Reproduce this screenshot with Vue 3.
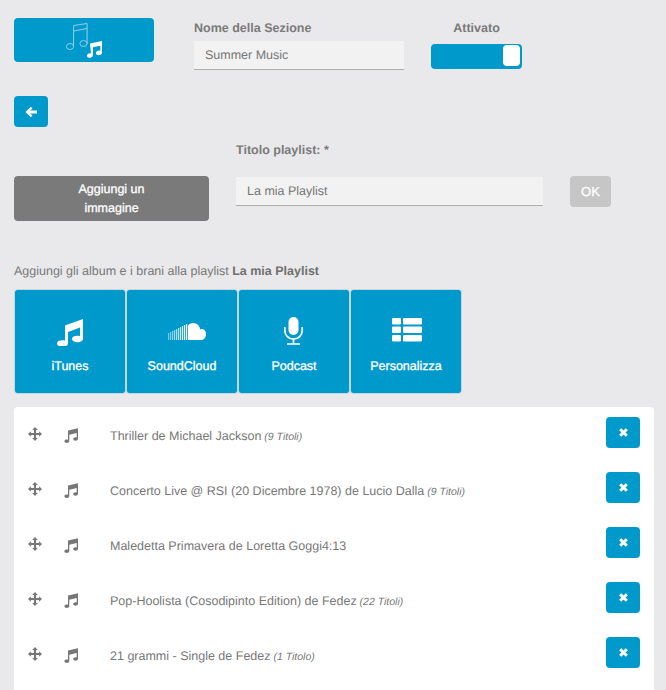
<template>
  <div class="page">
    <div class="section-head">
      <button type="button" class="btn hero-btn" aria-label="Musica">
        <svg width="37" height="35" viewBox="0 0 37 35">
          <g fill="none" stroke="#8fd0e8" stroke-width="1">
            <ellipse cx="4" cy="23.5" rx="3.6" ry="3" />
            <ellipse cx="17.5" cy="20.5" rx="3.6" ry="3" />
            <path d="M7.6 23.5V2.5L21.1 0.5V20.5M7.6 8L21.1 5.500" />
          </g>
          <path
            fill="#fff"
            d="M24 20.500l12-2.500v11.500c0 1.700-1.600 2.700-3.200 2.700s-2.800-1-2.800-2.300 1.300-2.400 3-2.400c.5 0 1 .1 1.300.2v-5l-7.400 1.600v7.800c0 1.700-1.600 2.800-3.200 2.800s-2.800-1-2.800-2.300 1.300-2.400 3-2.400c.5 0 .9.100 1.100.2z"
          />
        </svg>
      </button>
      <div class="field name-field">
        <label class="field-label" for="section-name">Nome della Sezione</label>
        <input id="section-name" class="text-input" type="text" value="Summer Music" />
      </div>
      <div class="toggle-field">
        <span class="field-label">Attivato</span>
        <button type="button" class="toggle" aria-pressed="true" aria-label="Attivato">
          <span class="toggle-knob"></span>
        </button>
      </div>
    </div>

    <button type="button" class="btn back-btn" aria-label="Indietro">
      <svg width="12" height="12" viewBox="0 0 12 12">
        <path fill="#fff" d="M5.800.7l1.700 1.700-2.300 2.200H12v2.800H5.200l2.300 2.200-1.700 1.700L.5 6z" />
      </svg>
    </button>

    <div class="playlist-row">
      <button type="button" class="btn image-btn">Aggiungi un<br />immagine</button>
      <div class="field title-field">
        <label class="field-label title-label" for="playlist-title">Titolo playlist: *</label>
        <input id="playlist-title" class="text-input" type="text" value="La mia Playlist" />
      </div>
      <button type="button" class="btn ok-btn">OK</button>
    </div>

    <p class="hint">Aggiungi gli album e i brani alla playlist <strong>La mia Playlist</strong></p>

    <div class="sources">
      <button v-for="source in sources" :key="source.name" type="button" class="btn source">
        <svg width="52" height="30" viewBox="0 0 52 30">
          <path
            v-if="source.icon === 'music'"
            fill="#fff"
            d="M21 9.500L39 3v20c0 2-2.400 3.200-5.500 3.200s-5.500-1.200-5.500-3.200 2.400-3.200 5.500-3.200c1 0 1.800.1 2.500.4v-8.700L24 16v11.500c0 2-2.400 3.200-5.500 3.200S13 29.500 13 27.500s2.400-3.200 5.500-3.200c1 0 1.800.1 2.500.4z"
          />
          <g v-else-if="source.icon === 'cloud'" fill="#fff">
            <rect
              v-for="bar in cloudBars"
              :key="bar.x"
              :x="bar.x"
              :y="24 - bar.h"
              width="1.2"
              :height="bar.h"
              :opacity="bar.o"
            />
            <path d="M32 9.500c1.200-1.600 3-2.500 5-2.500 3.800 0 6.800 2.800 7.200 6.400.5-.2 1-.3 1.500-.3 2.600 0 4.300 2.200 4.300 5.200S48 24 45.500 24H32z" />
          </g>
          <g v-else-if="source.icon === 'mic'">
            <rect x="20.500" y="1" width="10" height="18" rx="5" fill="#fff" />
            <path
              fill="none"
              stroke="#fff"
              stroke-width="1.700"
              d="M16.800 11v3.500a8.700 8.700 0 0 0 17.400 0V11M25.500 23v4.500M19 28h13"
            />
          </g>
          <g v-else fill="#fff" transform="translate(12 2)">
            <rect width="9" height="6.500" rx="1.300" />
            <rect y="8.500" width="9" height="6.500" rx="1.300" />
            <rect y="17" width="9" height="6.500" rx="1.300" />
            <rect x="11" width="19" height="6.500" rx="1.300" />
            <rect x="11" y="8.500" width="19" height="6.500" rx="1.300" />
            <rect x="11" y="17" width="19" height="6.500" rx="1.300" />
          </g>
        </svg>
        <span>{{ source.name }}</span>
      </button>
    </div>

    <div class="tracks">
      <div v-for="track in tracks" :key="track.title" class="track">
        <svg class="move-icon" width="14" height="14" viewBox="0 0 14 14">
          <path
            fill="#777"
            d="M7 0l2.800 2.900H8.100v3h3V4.200L14 7l-2.900 2.800V8.100h-3v3h1.700L7 14l-2.800-2.900h1.700v-3h-3v1.700L0 7l2.900-2.800v1.700h3v-3H4.200z"
          />
        </svg>
        <svg class="note-icon" width="14" height="15" viewBox="0 0 14 15">
          <path
            fill="#777"
            d="M4 2.600L14 .3v10.500c0 1.200-1.200 1.900-2.400 1.900s-2.400-.7-2.400-1.700 1.100-1.700 2.400-1.700c.4 0 .8.100 1.100.2V5L5.300 6.700V13c0 1.200-1.200 1.900-2.500 1.900S.4 14.200.4 13.200s1.100-1.700 2.400-1.700c.5 0 .9.100 1.200.2z"
          />
        </svg>
        <span class="track-text">{{ track.title }}<em v-if="track.count"> ({{ track.count }})</em></span>
        <button type="button" class="btn remove-btn" aria-label="Rimuovi">
          <svg width="9" height="9" viewBox="0 0 9 9">
            <path fill="none" stroke="#fff" stroke-width="3" d="M1.200 1.200l6.600 6.600M7.800 1.200L1.200 7.800" />
          </svg>
        </button>
      </div>
    </div>
  </div>
</template>

<script setup>
const sources = [
  { name: 'iTunes', icon: 'music' },
  { name: 'SoundCloud', icon: 'cloud' },
  { name: 'Podcast', icon: 'mic' },
  { name: 'Personalizza', icon: 'list' }
]

// bars of the soundcloud logo, fading out to the left
const cloudBars = Array.from({ length: 10 }, (_, i) => ({
  x: 12 + i * 2,
  h: 7 + i,
  o: 0.45 + i * 0.06
}))

const tracks = [
  { title: 'Thriller de Michael Jackson', count: '9 Titoli' },
  { title: 'Concerto Live @ RSI (20 Dicembre 1978) de Lucio Dalla', count: '9 Titoli' },
  { title: 'Maledetta Primavera de Loretta Goggi4:13' },
  { title: 'Pop-Hoolista (Cosodipinto Edition) de Fedez', count: '22 Titoli' },
  { title: '21 grammi - Single de Fedez', count: '1 Titolo' }
]
</script>

<style>
html,
body {
  background: #e9e9eb;
}
</style>

<style scoped>
.page {
  height: 690px;
  box-sizing: border-box;
  padding: 18px 12px 0 14px;
  overflow: hidden;
  background: #e9e9eb;
  color: #777;
  font-family: "Liberation Sans", Arial, sans-serif;
  font-size: 12.5px;
  text-rendering: geometricPrecision;
}

.btn {
  display: block;
  padding: 0;
  border: 0;
  border-radius: 4px;
  background: #0099cb;
  color: #fff;
  font-family: inherit;
  font-size: 12.5px;
  text-rendering: geometricPrecision;
  -webkit-text-stroke: 0.3px #fff;
  cursor: pointer;
}

.section-head {
  display: flex;
  align-items: flex-start;
}

.hero-btn {
  display: flex;
  align-items: center;
  justify-content: center;
  width: 140px;
  height: 44px;
}

.field {
  display: flex;
  flex-direction: column;
}

.field-label {
  font-weight: 700;
  line-height: 14px;
  color: #7a7a7a;
}

.name-field {
  width: 210px;
  margin: 3px 0 0 40px;
  gap: 6px;
}

.text-input {
  box-sizing: border-box;
  width: 100%;
  height: 29px;
  padding: 0 11px;
  border: 0;
  border-bottom: 1px solid #aeaeae;
  border-radius: 0;
  background: #f2f2f2;
  color: #777;
  font-family: inherit;
  font-size: 12.5px;
  text-rendering: geometricPrecision;
}

.toggle-field {
  display: flex;
  flex-direction: column;
  align-items: center;
  gap: 9px;
  width: 91px;
  margin: 3px 0 0 27px;
}

.toggle {
  display: flex;
  justify-content: flex-end;
  box-sizing: border-box;
  width: 91px;
  height: 25px;
  padding: 1px 2px 0 0;
  border: 0;
  border-radius: 4px;
  background: #0099cb;
}

.toggle-knob {
  width: 17px;
  height: 21px;
  border-radius: 4px;
  background: #fff;
}

.back-btn {
  display: flex;
  align-items: center;
  justify-content: center;
  width: 34px;
  height: 31px;
  margin-top: 26px;
}

.playlist-row {
  display: flex;
  align-items: flex-start;
  margin-top: 16px;
}

.image-btn {
  width: 195px;
  height: 45px;
  margin-top: 33px;
  background: #7a7a7a;
  line-height: 19px;
}

.title-field {
  width: 307px;
  margin-left: 27px;
}

.title-label {
  margin-bottom: 20px;
}

.ok-btn {
  width: 41px;
  height: 31px;
  margin: 33px 0 0 27px;
  background: #c6c6c6;
  font-size: 13px;
}

.hint {
  margin: 43px 0 0;
  line-height: 14px;
}

.hint strong {
  color: #6f6f6f;
}

.sources {
  display: flex;
  gap: 2px;
  margin: 12px 0 0 1px;
}

.source {
  display: flex;
  flex-direction: column;
  align-items: center;
  width: 110px;
  height: 103px;
  padding-top: 26px;
  box-sizing: border-box;
  border-radius: 2px;
  outline: 1px solid #c6d6de;
}

.source span {
  margin-top: 13px;
  line-height: 14px;
}

.tracks {
  width: 640px;
  margin-top: 14px;
  padding-top: 10px;
  padding-bottom: 40px;
  border-radius: 4px;
  background: #fff;
}

.track {
  display: flex;
  align-items: flex-start;
  height: 55px;
}

.move-icon {
  flex: none;
  margin: 10px 0 0 14px;
}

.note-icon {
  flex: none;
  margin: 11px 0 0 22px;
}

.track-text {
  flex: 1;
  margin: 12px 0 0 32px;
  line-height: 14px;
}

.track-text em {
  font-size: 10.5px;
}

.remove-btn {
  display: flex;
  align-items: center;
  justify-content: center;
  flex: none;
  width: 34px;
  height: 31px;
  margin-right: 14px;
}
</style>
